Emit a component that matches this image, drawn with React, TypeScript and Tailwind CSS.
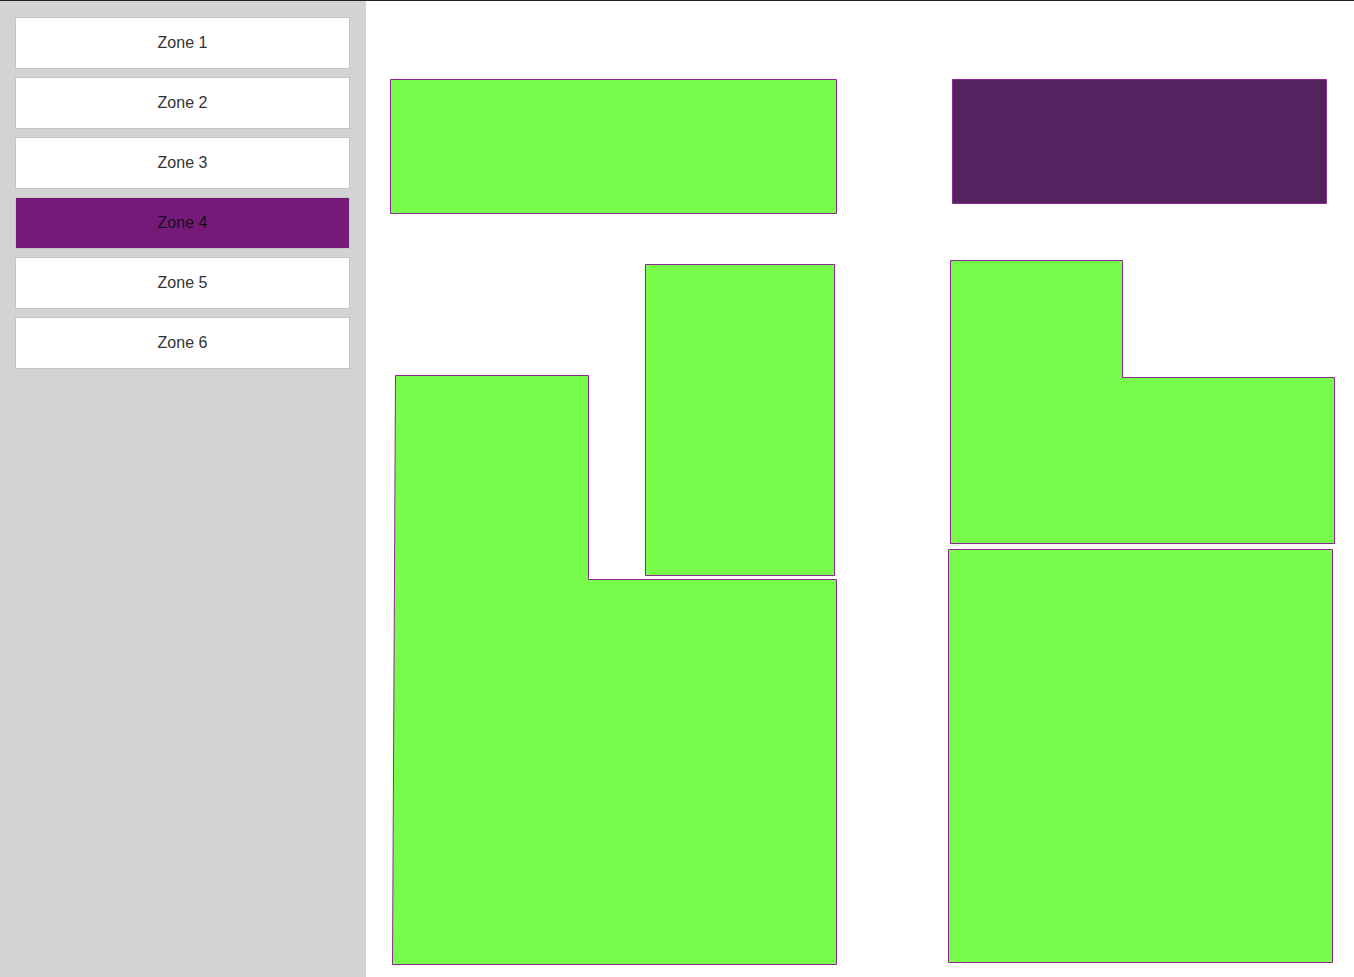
import {useState} from 'react';

const zones = ['Zone 1', 'Zone 2', 'Zone 3', 'Zone 4', 'Zone 5', 'Zone 6'];

// floor plan shapes, coordinates relative to the canvas (x - 366, y - 1)
const shapes = [
  {id: 'a', points: '24,78 470,78 470,212 24,212', fill: '#77fc4c'},
  {id: 'b', points: '586,78 960,78 960,202 586,202', fill: '#52235e'},
  {id: 'c', points: '279,263 468,263 468,574 279,574', fill: '#77fc4c'},
  {id: 'd', points: '29,374 222,374 222,578 470,578 470,963 26,963', fill: '#77fc4c'},
  {id: 'e', points: '584,259 756,259 756,376 968,376 968,542 584,542', fill: '#77fc4c'},
  {id: 'f', points: '582,548 966,548 966,961 582,961', fill: '#77fc4c'},
];

export default function App() {
  const [active, setActive] = useState(3);

  return (
    <div className="flex h-[977px] overflow-hidden border-t border-[#222] font-['Liberation_Sans',Arial,sans-serif]">
      <aside className="flex w-[366px] shrink-0 flex-col gap-2 bg-[#d3d3d3] px-[15px] pt-4">
        {zones.map((z, i) => (
          <button
            key={z}
            onClick={() => setActive(i)}
            className={
              i === active
                ? 'h-[52px] w-[335px] border border-[#c8c8c8] bg-[#751a79] text-base text-[#1a0b1b]'
                : 'h-[52px] w-[335px] border border-[#c4c4c4] bg-white text-base text-[#333]'
            }
          >
            {z}
          </button>
        ))}
      </aside>
      <main className="flex-1 bg-white">
        <svg width="988" height="976" viewBox="0 0 988 976" className="block">
          <g transform="translate(0.5 0.5)">
            {shapes.map((s) => (
              <polygon key={s.id} points={s.points} fill={s.fill} stroke="#8a2a8e" strokeWidth="1" />
            ))}
          </g>
        </svg>
      </main>
    </div>
  );
}
